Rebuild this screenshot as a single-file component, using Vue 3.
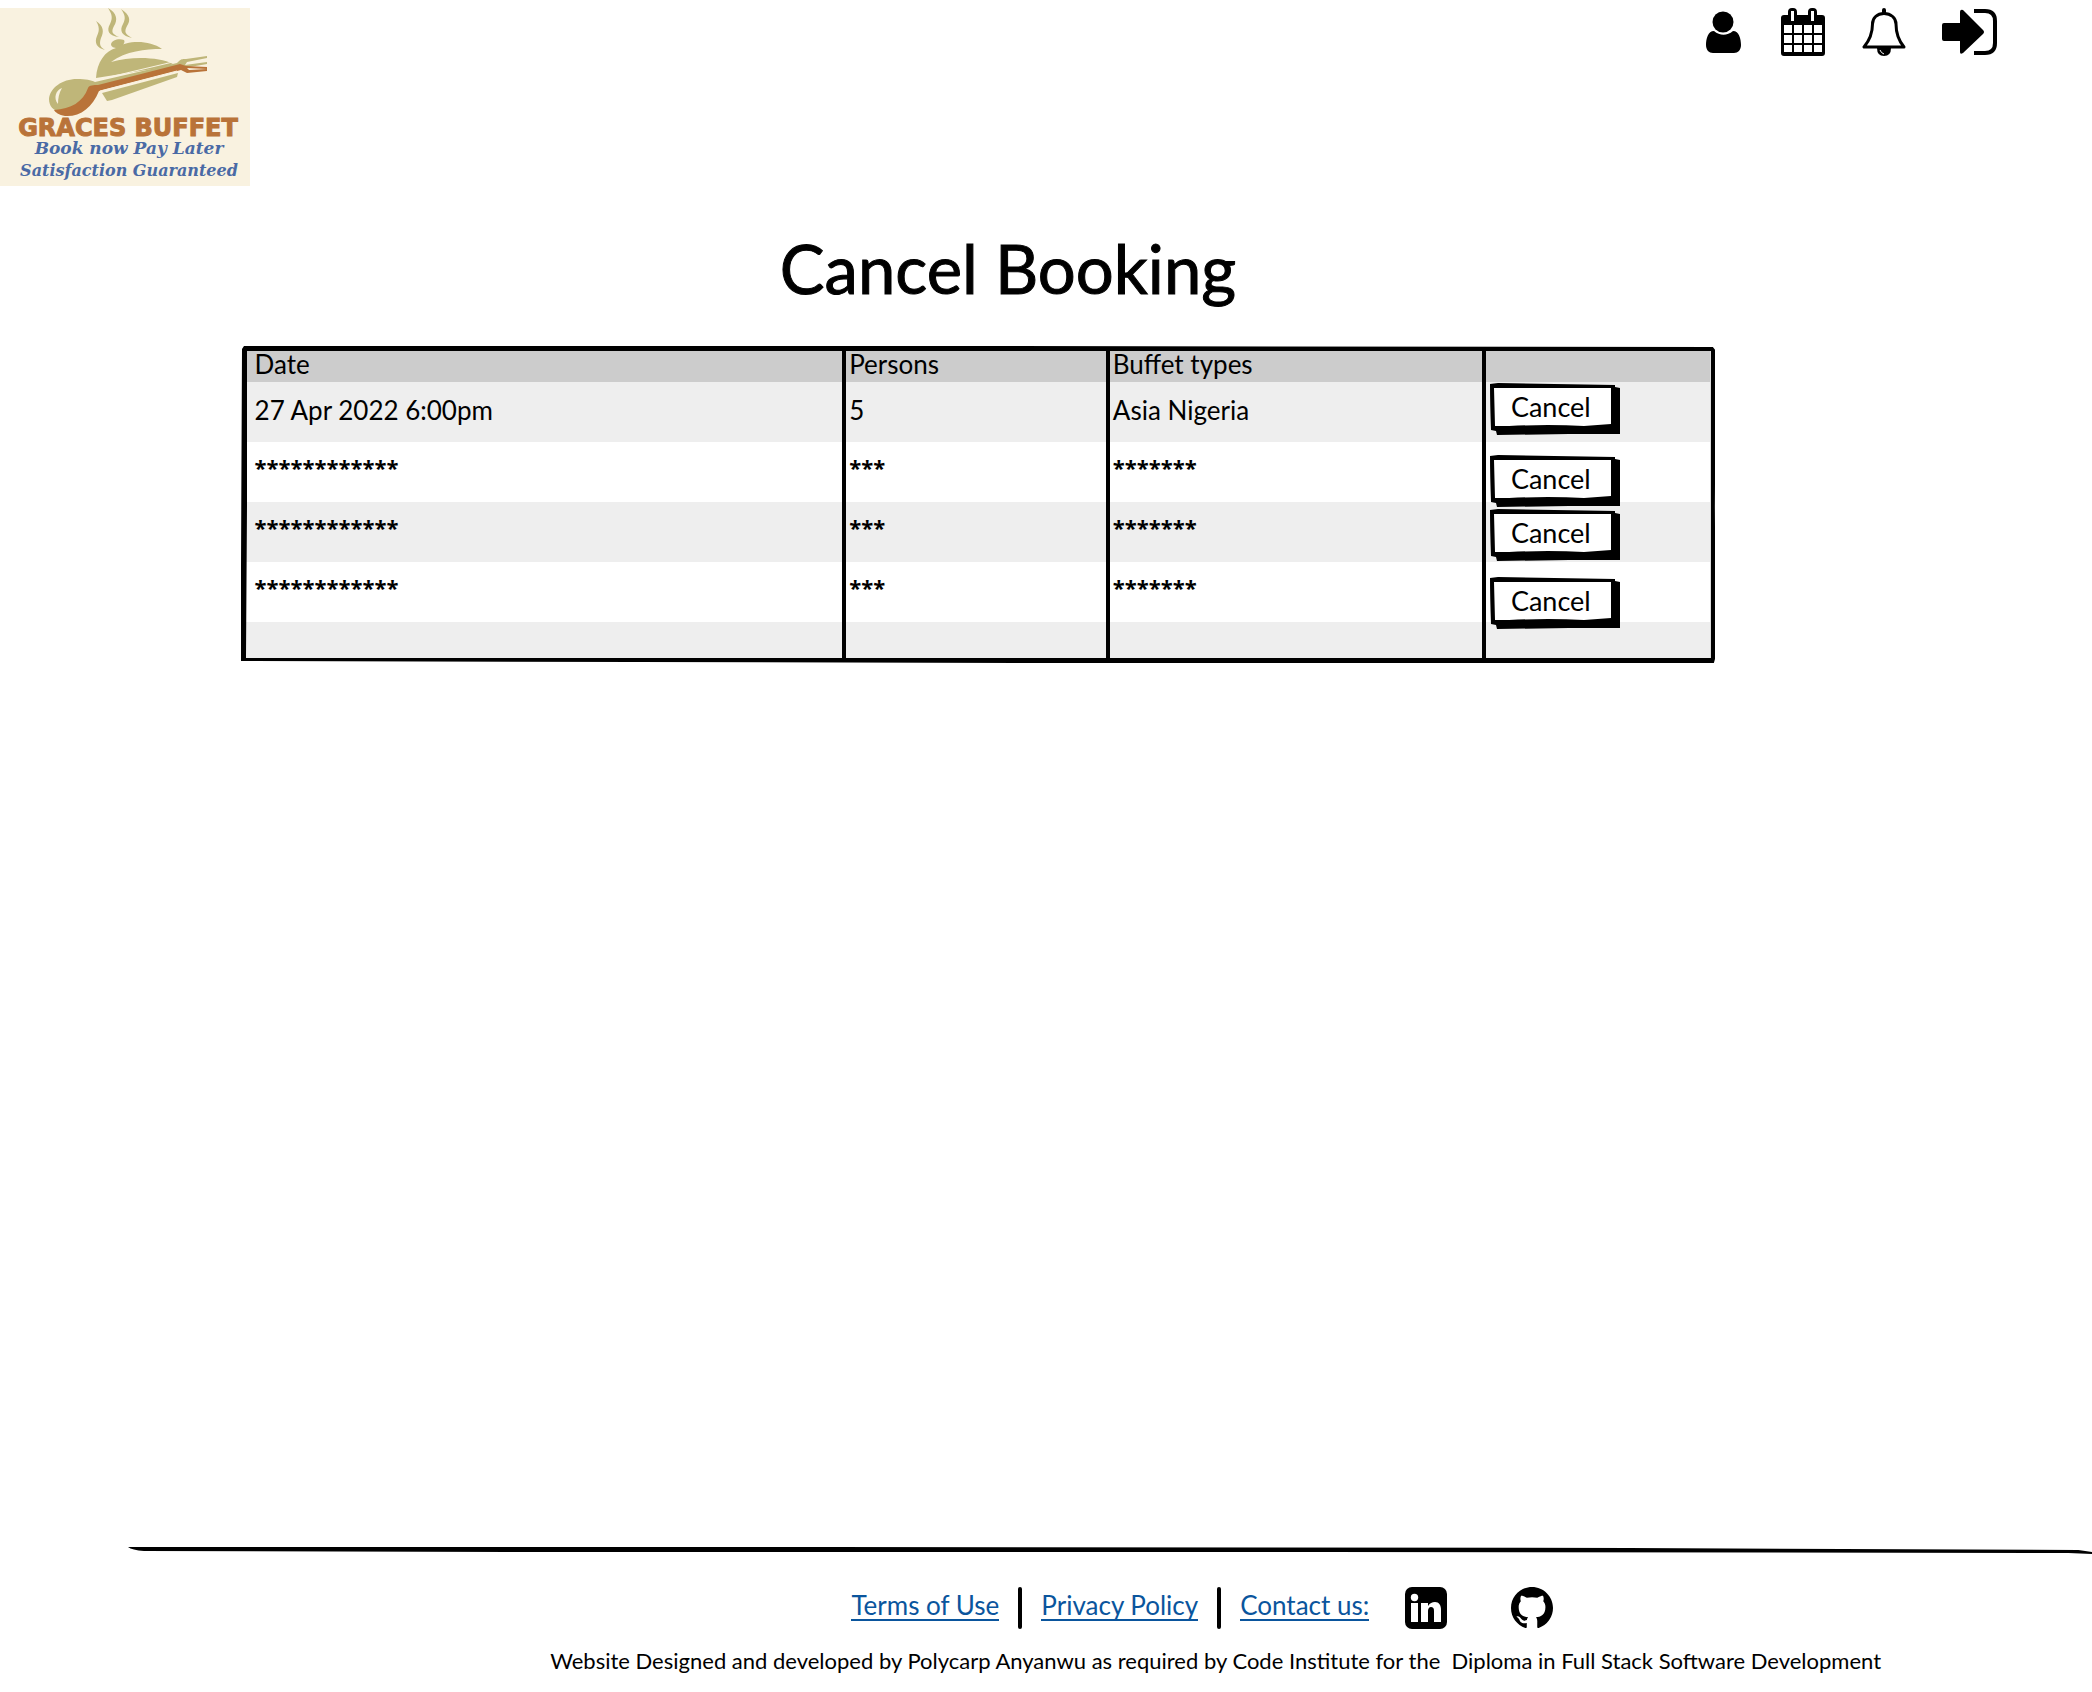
<script setup>
const bookings = [
  { date: '27 Apr 2022 6:00pm', persons: '5', buffet: 'Asia Nigeria', drop: 1 },
  { date: '************', persons: '***', buffet: '*******', drop: 13, masked: true },
  { date: '************', persons: '***', buffet: '*******', drop: 7, masked: true },
  { date: '************', persons: '***', buffet: '*******', drop: 15, masked: true },
]
</script>

<template>
  <div class="page">
    <header class="top">
      <a class="logo" href="#" aria-label="Graces Buffet home">
        <svg viewBox="0 0 250 178" width="250" height="178">
          <rect width="250" height="178" fill="#f9f2e0" />
          <g fill="#bfb679">
            <path d="M96 13c8 5 8 11 5 17-2 6-1 9 4 12-8-2-11-7-8-14 3-6 2-10-1-15z" />
            <path d="M108 0c9 5 10 12 6 18-3 6-2 8 5 11-10-1-13-6-9-13 3-6 2-10-2-16z" />
            <path d="M121 1c9 6 10 11 6 17-3 6-2 8 5 12-10-2-13-7-9-14 3-6 2-9-2-15z" />
            <path d="M111 36c1-4 8-6 13-4 2 3-3 8-7 8-3 0-6-1-6-4z" />
            <path d="M96 70c1-16 9-27 20-30 12-8 33-8 46 1-17 0-36 2-51 13 21-6 48-5 62 2l-8 3z" />
            <path d="M49 91c1-11 13-20 28-20 9 0 14 1 18 3l82-19c4-5 7-4 9-4l21-3v2l-20 4-2 3 22-3v2l-23 4-88 23c-11 10-20 22-35 21-8-1-12-6-12-13z" />
            <path d="M102 85l76-20-1 4-65 23-5 1z" />
          </g>
          <path fill="#b97339" d="M54 102c17-1 29-8 34-22 1-3 6-3 10-3l82-21 6 2 21 1v2l-20-1 2 2 18-1v2l-20 2-6-3-82 21c-7 17-19 26-34 25-6-1-10-4-11-6z" />
          <path fill="none" stroke="#f9f2e0" d="M97 72l80-19M100 83l77-20" />
          <path fill="#f9f2e0" d="M62 80c-6 2-9 10-4 16 0-6 1-11 4-16z" />
          <text class="logo-name" x="128" y="128" text-anchor="middle">GRACES BUFFET</text>
          <text class="logo-line lead" x="129" y="146" text-anchor="middle">Book now Pay Later</text>
          <text class="logo-line" x="129" y="168" text-anchor="middle">Satisfaction Guaranteed</text>
        </svg>
      </a>

      <nav class="tools" aria-label="Account">
        <a href="#" aria-label="Profile">
          <svg viewBox="0 0 38 48" width="38" height="48">
            <circle cx="17" cy="14" r="10.5" />
            <path d="M8 23c6 5 13 5 19 0 6 0 8 8 8 14 0 5-3 8-7 8H7c-4 0-7-3-7-8 0-6 2-14 8-14z" />
          </svg>
        </a>
        <a href="#" aria-label="Calendar">
          <svg viewBox="0 0 46 48" width="46" height="48">
            <path fill-rule="evenodd" d="M4 7h4V4q0-4 4-4h1q4 0 4 4v3h11V4q0-4 4-4h1q4 0 4 4v3h5q3 0 3 3v35q0 3-3 3H4q-3 0-3-3V10q0-3 3-3zM11 3v10h3V3zM31 3v10h3V3zM4 17v8h8v-8zM14 17v8h8v-8zM24 17v8h8v-8zM34 17v8h8v-8zM4 27v8h8v-8zM14 27v8h8v-8zM24 27v8h8v-8zM34 27v8h8v-8zM4 37v7h8v-7zM14 37v7h8v-7zM24 37v7h8v-7zM34 37v7h8v-7z" />
          </svg>
        </a>
        <a href="#" aria-label="Notifications">
          <svg viewBox="0 0 44 48" width="44" height="48">
            <path d="M20 5V2q0-2 2-2t2 2v3zM15 40h14q0 8-7 8t-7-8z" />
            <path fill="none" stroke="#000" stroke-width="3" stroke-linejoin="round" d="M22 5.500C15 5.500 10.500 10 10.500 16C10.500 27 7 33 2 39H42C37 33 34 27 34 16C34 10 29 5.500 22 5.500z" />
            <path fill="none" stroke="#fff" d="M18 42q1 3 4 4" />
          </svg>
        </a>
        <a href="#" aria-label="Sign in">
          <svg viewBox="0 0 56 48" width="56" height="48">
            <path d="M2 15h16V4q0-3 3-2l20 20q2 2 0 4L21 45q-3 2-3-1V33H2q-2 0-2-2V17q0-2 2-2z" />
            <path fill="none" stroke="#000" stroke-width="4" d="M32 3h11q10 0 10 10v22q0 10-10 10H32" />
          </svg>
        </a>
      </nav>
    </header>

    <main>
      <h1>Cancel Booking</h1>

      <div class="board">
        <table>
          <colgroup>
            <col class="col-date" />
            <col class="col-persons" />
            <col class="col-buffet" />
            <col />
          </colgroup>
          <thead>
            <tr>
              <th scope="col">Date</th>
              <th scope="col">Persons</th>
              <th scope="col">Buffet types</th>
              <th scope="col" aria-label="Action"></th>
            </tr>
          </thead>
          <tbody>
            <tr v-for="(b, i) in bookings" :key="i" :class="{ masked: b.masked }">
              <td>{{ b.date }}</td>
              <td>{{ b.persons }}</td>
              <td>{{ b.buffet }}</td>
              <td class="action">
                <div class="slot" :style="{ paddingTop: b.drop + 'px' }">
                  <button type="button" class="cancel">
                    <svg class="sketch" viewBox="0 0 131 52" aria-hidden="true">
                      <path d="M1 1L9 0 126 2V4L131 5V51H80L8 52 7 48 2 47Q1 20 1 1z" />
                      <path fill="#fff" d="M5 5L122 5V41L95 43Q60 41 20 43L6 43z" />
                    </svg>
                    <span>Cancel</span>
                  </button>
                </div>
              </td>
            </tr>
            <tr class="blank">
              <td></td>
              <td></td>
              <td></td>
              <td></td>
            </tr>
          </tbody>
        </table>
        <svg class="sketch" viewBox="0 0 1475 317" preserveAspectRatio="none" aria-hidden="true">
          <path fill-rule="evenodd" d="M3 0L700 0 1472 1 1475 5 1474 160 1475 310 1473 317 800 317 0 315 0 220 1 3zM6 5L6 160 5 312 700 312 1470 312 1470 160 1470 5 700 5z" />
        </svg>
      </div>
    </main>

    <footer>
      <svg class="rule" viewBox="0 0 1964 8" preserveAspectRatio="none" aria-hidden="true">
        <path d="M0 0L700 0 1500 1 1950 3 1964 5 1964 7 1940 6 1200 5 400 5 16 4Q4 3 0 0z" />
      </svg>
      <nav class="links" aria-label="Footer">
        <a class="text-link" href="#">Terms of Use</a>
        <span class="bar"></span>
        <a class="text-link" href="#">Privacy Policy</a>
        <span class="bar"></span>
        <a class="text-link" href="#">Contact us:</a>
        <a class="social" href="#" aria-label="LinkedIn">
          <svg viewBox="0 0 42 42" width="42" height="42">
            <rect width="42" height="42" rx="7" />
            <g fill="#fff">
              <circle cx="9.500" cy="10.500" r="3.700" />
              <path d="M6 16h7v19H6zM16 16h7v3c2-3 4-4 7-4 4 0 6 3 6 8v12h-7V24c0-3-1-4-3-4s-3 2-3 4v11h-7z" />
            </g>
          </svg>
        </a>
        <a class="social" href="#" aria-label="GitHub">
          <svg viewBox="0 0 16 16" width="42" height="42">
            <path d="M8 0C3.580 0 0 3.580 0 8c0 3.540 2.290 6.530 5.470 7.590.4.070.55-.17.55-.38 0-.19-.01-.82-.01-1.490-2.010.37-2.530-.49-2.690-.94-.09-.23-.48-.94-.82-1.130-.28-.15-.68-.52-.01-.53.63-.01 1.080.58 1.230.82.72 1.210 1.870.87 2.330.66.07-.52.28-.87.51-1.070-1.780-.2-3.640-.89-3.640-3.950 0-.87.31-1.590.82-2.150-.08-.2-.36-1.020.08-2.120 0 0 .67-.21 2.200.82.64-.18 1.320-.27 2-.27s1.360.09 2 .27c1.530-1.040 2.200-.82 2.200-.82.44 1.100.16 1.920.08 2.120.51.56.82 1.270.82 2.150 0 3.070-1.870 3.750-3.650 3.950.29.25.54.73.54 1.480 0 1.070-.01 1.930-.01 2.200 0 .21.15.46.55.38A8.010 8.010 0 0 0 16 8c0-4.420-3.580-8-8-8z" />
          </svg>
        </a>
      </nav>
      <p>Website Designed and developed by Polycarp Anyanwu as required by Code Institute for the&nbsp; Diploma in Full Stack Software Development</p>
    </footer>
  </div>
</template>

<style>
body {
  margin: 0;
  background: #fff;
}
</style>

<style scoped>
.page {
  display: flex;
  flex-direction: column;
  min-height: 100vh;
  color: #000;
  font-family: Lato, "Open Sans", sans-serif;
  font-size: 26px;
  line-height: 32px;
}

.top {
  display: flex;
  justify-content: space-between;
  align-items: flex-start;
  padding: 8px 94px 0 0;
}

svg {
  display: block;
}

.logo-name {
  fill: #b97339;
  stroke: #b97339;
  font: bold 24px "DejaVu Sans", sans-serif;
}

.logo-line {
  fill: #4a6aa5;
  font: italic bold 16px "DejaVu Serif", serif;
}

.logo-line.lead {
  font-size: 17px;
}

.tools {
  display: flex;
  gap: 36px;
}

main {
  flex: 1;
}

h1 {
  margin: 42px 76px 38px 0;
  font-size: 67px;
  font-weight: 400;
  line-height: 80px;
  text-align: center;
  -webkit-text-stroke: 1px #000;
}

.board {
  position: relative;
  width: 70.5%;
  margin-left: 11.5%;
}

.sketch {
  position: absolute;
  inset: 0;
  width: 100%;
  height: 100%;
  pointer-events: none;
}

table {
  width: 100%;
  border: 5px solid transparent;
  border-collapse: separate;
  border-spacing: 0;
  table-layout: fixed;
}

.col-date {
  width: 41%;
}

.col-persons {
  width: 18%;
}

.col-buffet {
  width: 25.7%;
}

th,
td {
  height: 60px;
  box-sizing: border-box;
  padding: 12px 0 0 3px;
  border-right: 4px solid #000;
  font-weight: 400;
  text-align: left;
  vertical-align: top;
  white-space: nowrap;
}

th {
  height: 31px;
  padding-top: 0;
  line-height: 26px;
  background: #ccc;
}

th:first-child,
td:first-child {
  padding-left: 9px;
}

th:last-child,
td:last-child {
  border-right: 0;
}

tbody tr:nth-child(odd) {
  background: #eee;
}

.masked td:not(.action) {
  font-family: "Open Sans", sans-serif;
  font-size: 22px;
  font-weight: 700;
  line-height: 26px;
}

.blank td {
  height: 36px;
  padding: 0;
}

td.action {
  padding: 0 0 0 3px;
}

.slot {
  height: 44px;
}

.cancel {
  position: relative;
  display: block;
  width: 131px;
  height: 52px;
  padding: 0 8px 4px 0;
  border: 0;
  background: none;
  color: #000;
  font: inherit;
  font-size: 27px;
  cursor: pointer;
}

.cancel span {
  position: relative;
}

footer {
  padding-bottom: 15px;
}

.rule {
  width: 93.9%;
  height: 8px;
  margin-left: 6.1%;
}

.links {
  display: flex;
  align-items: center;
  gap: 19px;
  margin-top: 32px;
  padding-left: 40.7%;
}

.text-link {
  margin-bottom: 4px;
  border-bottom: 2px solid #0a559d;
  color: #0a559d;
  line-height: 28px;
  text-decoration: none;
}

.bar {
  width: 4px;
  height: 42px;
  border-radius: 2px;
  background: #000;
}

.social {
  margin-left: 17px;
}

.social + .social {
  margin-left: 45px;
}

footer p {
  margin: 16px 0 0;
  padding-left: 26.3%;
  font-size: 22px;
  white-space: nowrap;
}
</style>
